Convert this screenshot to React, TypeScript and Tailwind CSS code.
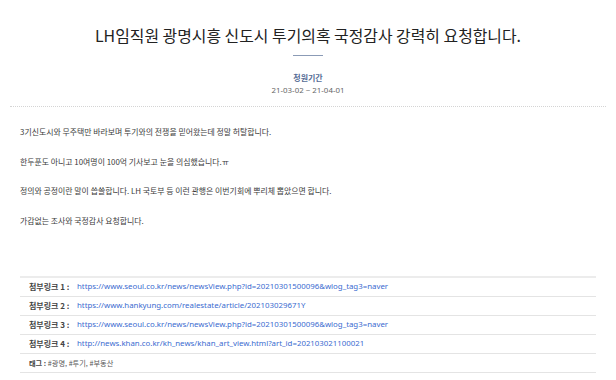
import React from 'react';

const links = [
  'https://www.seoul.co.kr/news/newsView.php?id=20210301500096&wlog_tag3=naver',
  'https://www.hankyung.com/realestate/article/202103029671Y',
  'https://www.seoul.co.kr/news/newsView.php?id=20210301500096&wlog_tag3=naver',
  'http://news.khan.co.kr/kh_news/khan_art_view.html?art_id=202103021100021',
];

const paragraphs = [
  '3기신도시와 무주택만 바라보며 투기와의 전쟁을 믿어왔는데 정말 허탈합니다.',
  '한두푼도 아니고 10여명이 100억 기사보고 눈을 의심했습니다.ㅠ',
  '정의와 공정이란 말이 씁쓸합니다. LH 국토부 등 이런 관행은 이번기회에 뿌리체 뽑았으면 합니다.',
  '가감없는 조사와 국정감사 요청합니다.',
];

const kr = { fontFamily: '"Noto Sans CJK KR", sans-serif' };

export default function App() {
  return (
    <div
      className="w-[616px] h-[380px] overflow-hidden bg-white px-[10px]"
      style={{ fontFamily: '"Noto Sans", "Noto Sans CJK KR", sans-serif' }}
    >
      {/* 제목 */}
      <div className="flex flex-col items-center pt-[26px]">
        <h1 className="text-[15.9px] leading-[20px] text-[#222] font-normal" style={kr}>
          LH임직원 광명시흥 신도시 투기의혹 국정감사 강력히 요청합니다.
        </h1>
        <div className="mt-[9px] h-px w-[30px] bg-[#8b9bb6]" />
        <div className="mt-[17px] text-[8px] leading-[10px] font-bold text-[#566d96]" style={kr}>
          청원기간
        </div>
        <div className="mt-[2px] text-[7.9px] leading-[10px] text-[#666]">21-03-02 ~ 21-04-01</div>
      </div>

      {/* 본문 */}
      <div className="mt-[11px] border-t border-dotted border-[#d4d4d4] pl-[10px] pt-[20px] flex flex-col gap-[19.5px]">
        {paragraphs.map((p, i) => (
          <p key={i} className="text-[7.9px] leading-[10px] text-[#3a3a3a]" style={kr}>
            {p}
          </p>
        ))}
      </div>

      {/* 첨부링크 */}
      <div className="mt-[50px] mx-[10px] border-t-2 border-[#ececec]">
        {links.map((url, i) => (
          <div key={i} className="flex items-center h-[19.2px] border-b border-[#e4e4e4] pl-[9px]">
            <span className="w-[48px] shrink-0 text-[8px] font-bold text-[#444]" style={kr}>
              첨부링크 {i + 1} :
            </span>
            <a href="#" className="text-[7.85px] text-[#3a6bd0] whitespace-nowrap">
              {url}
            </a>
          </div>
        ))}
        <div className="flex items-center h-[19.2px] border-b border-[#e4e4e4] pl-[9px]">
          <span className="text-[7.2px] text-[#555]" style={kr}>
            <b className="text-[#444]">태그 :</b> #광명, #투기, #부동산
          </span>
        </div>
      </div>
    </div>
  );
}
